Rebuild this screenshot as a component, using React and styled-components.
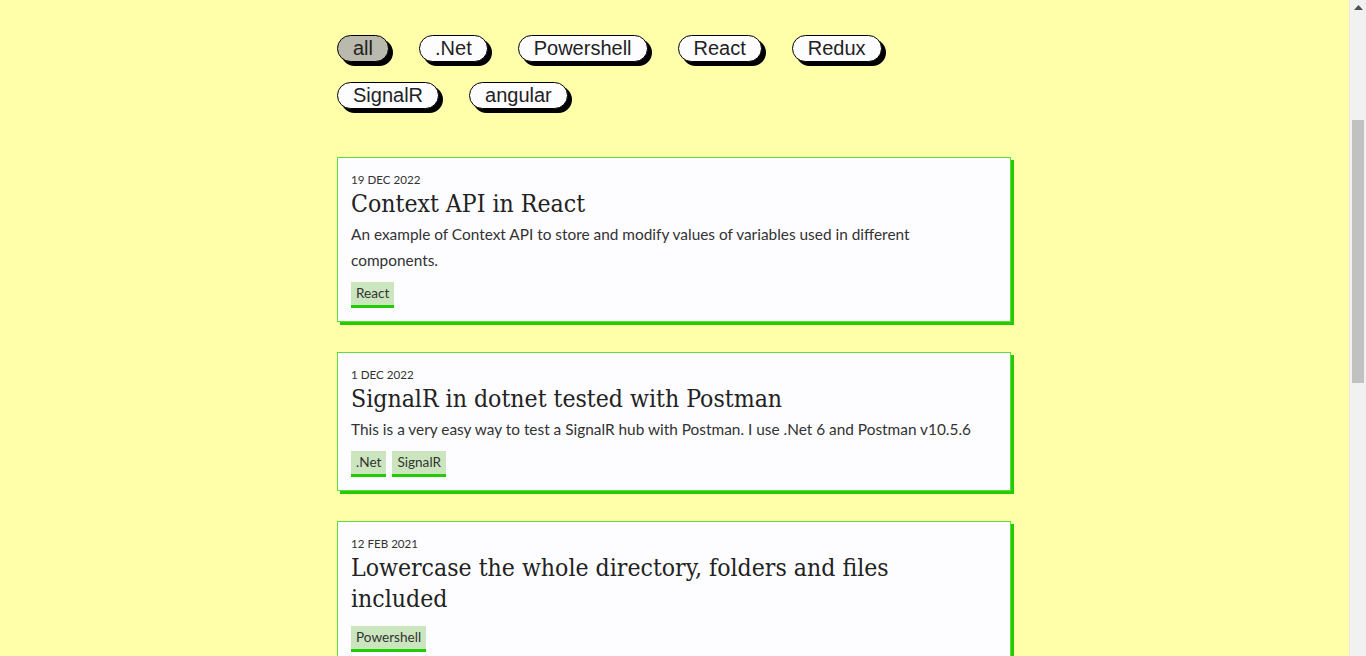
import React from "react";
import styled, { createGlobalStyle } from "styled-components";

const Global = createGlobalStyle`
  html { background: #ffffaa; }
  body { margin: 0; padding-right: 18px; background: #ffffaa; font-family: "Lato", "Noto Sans", sans-serif; color: #333; }
  * { box-sizing: border-box; }
`;

const Page = styled.main`
  width: 674px;
  margin: 0 auto;
  padding: 35px 0 40px;
`;

const FilterBar = styled.nav`
  display: flex;
  flex-wrap: wrap;
  column-gap: 30px;
  row-gap: 20px;
`;

const FilterButton = styled.button`
  height: 27px;
  padding: 0 15px;
  border: 1px solid #000;
  border-radius: 14px;
  background: ${(p) => (p.$active ? "#b9b9ad" : "#fdfdff")};
  box-shadow: 4px 4px 0 #000;
  font-family: "Liberation Sans", Arial, sans-serif;
  font-size: 20px;
  line-height: 23px;
  color: #222;
  cursor: pointer;
`;

const PostList = styled.section`
  margin-top: 48px;
  display: flex;
  flex-direction: column;
  gap: 30px;
`;

const Card = styled.article`
  background: #fdfdff;
  border: 1px solid #5fdc3f;
  box-shadow: 3px 3px 0 #22cc00;
  padding: 14px 24px 13px 13px;
`;

const DateLine = styled.div`
  font-family: "Lato", sans-serif;
  font-size: 11.6px;
  line-height: 16px;
  text-transform: uppercase;
  color: #333;
`;

const Title = styled.h2`
  margin: 0;
  font-family: "DejaVu Serif", serif;
  font-stretch: condensed;
  font-weight: 400;
  font-size: 24.6px;
  line-height: 31px;
  color: #222;
`;

const Description = styled.p`
  margin: 2px 0 0;
  font-family: "Lato", sans-serif;
  font-size: 15.4px;
  line-height: 26px;
  color: #333;
`;

const Tags = styled.div`
  display: flex;
  gap: 6px;
  margin-top: ${(p) => (p.$afterTitle ? "12px" : "9px")};
`;

const Tag = styled.span`
  height: 26px;
  padding: 0 5px;
  background: #cbe6bf;
  border-bottom: 3px solid #22cc00;
  font-family: "Lato", sans-serif;
  font-size: 13.6px;
  line-height: 23px;
  color: #333;
`;

const ScrollTrack = styled.div`
  position: fixed;
  top: 0;
  right: 0;
  width: 17px;
  height: 100vh;
  background: #f1f1f1;
  border-left: 1px solid #e8e8e8;
`;

const ScrollArrow = styled.svg`
  position: absolute;
  top: 5px;
  left: 4px;
`;

const ScrollThumb = styled.div`
  position: absolute;
  top: 120px;
  left: 2px;
  width: 12px;
  height: 263px;
  background: #c1c1c1;
`;

const filters = ["all", ".Net", "Powershell", "React", "Redux", "SignalR", "angular"];

const posts = [
  {
    date: "19 Dec 2022",
    title: "Context API in React",
    desc: "An example of Context API to store and modify values of variables used in different components.",
    tags: ["React"],
  },
  {
    date: "1 Dec 2022",
    title: "SignalR in dotnet tested with Postman",
    desc: "This is a very easy way to test a SignalR hub with Postman. I use .Net 6 and Postman v10.5.6",
    tags: [".Net", "SignalR"],
  },
  {
    date: "12 Feb 2021",
    title: "Lowercase the whole directory, folders and files included",
    desc: "",
    tags: ["Powershell"],
  },
];

export default function App() {
  return (
    <>
      <Global />
      <Page>
        <FilterBar>
          {filters.map((f) => (
            <FilterButton key={f} $active={f === "all"}>
              {f}
            </FilterButton>
          ))}
        </FilterBar>
        <PostList>
          {posts.map((p) => (
            <Card key={p.title}>
              <DateLine>{p.date}</DateLine>
              <Title>{p.title}</Title>
              {p.desc && <Description>{p.desc}</Description>}
              <Tags $afterTitle={!p.desc}>
                {p.tags.map((t) => (
                  <Tag key={t}>{t}</Tag>
                ))}
              </Tags>
            </Card>
          ))}
        </PostList>
      </Page>
      <ScrollTrack aria-hidden="true">
        <ScrollArrow width="9" height="5" viewBox="0 0 9 5">
          <path d="M0 5 L4.5 0 L9 5 Z" fill="#505050" />
        </ScrollArrow>
        <ScrollThumb />
      </ScrollTrack>
    </>
  );
}
